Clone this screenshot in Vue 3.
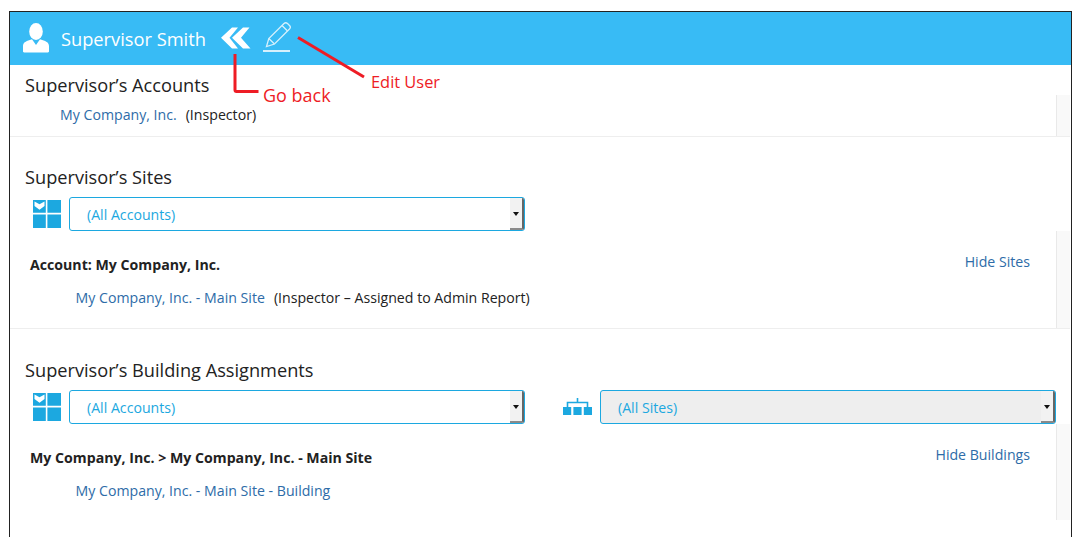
<template>
  <div class="frame">
    <header class="bar">
      <svg class="user" viewBox="0 0 26 30" width="26" height="30"><ellipse cx="13" cy="8.5" rx="6.8" ry="8.500" fill="#fff"/><path d="M1.200 29.500c-.9 0-1.200-.5-1.200-1.200v-5c0-3.500 2.500-5 6.800-6.300l2.200-.7 4 5.600 4-5.600 2.200.7c4.300 1.300 6.800 2.800 6.800 6.300v5c0 .7-.3 1.200-1.200 1.200z" fill="#fff"/></svg>
      <span class="name">Supervisor Smith</span>
      <svg class="back" viewBox="0 0 30 22" width="30" height="22"><path d="M0 10.800L11 .5h6L8.500 10.800 17 21.500h-6z M11 10.800L22 .5h6.500L20 10.800l9.500 10.700H22z" fill="#fff"/></svg>
      <svg class="pencil" viewBox="0 0 30 32" width="30" height="32" fill="none" stroke="#d6f0fc" stroke-width="1.300"><path d="M3.500 25.500l2.300-8L21 2.500c1-1 2.500-1 3.500 0l2 2c1 1 1 2.500 0 3.500L11.500 23z"/><path d="M5.800 17.500l5.700 5.500M19 4.500l5.500 5.500"/><path d="M0 30h27" stroke-width="2"/></svg>
    </header>

    <section class="section">
      <h2 class="first">Supervisor’s Accounts</h2>
      <div class="list short">
        <div class="body"><p class="row accounts"><a>My Company, Inc.</a><span>(Inspector)</span></p></div>
        <div class="strip"></div>
      </div>
    </section>

    <section class="section">
      <h2>Supervisor’s Sites</h2>
      <div class="filters">
        <svg class="grid" viewBox="0 0 28 28" width="28" height="28"><path d="M0 0h12.800v12.800H0z M14.400 0H28v12.800H14.400z M0 14.400h12.800V28H0z M14.400 14.400H28V28H14.400z" fill="#1ca8e0"/><path d="M1.500 1.500l5 2.800 5-2.800v4.500l-5 3.800-5-3.800z" fill="#fff"/></svg>
        <div class="select"><span>(All Accounts)</span><i class="spin"><b></b></i></div>
      </div>
      <div class="list mid">
        <div class="body">
          <div class="group"><strong>Account: My Company, Inc.</strong><a class="hide">Hide Sites</a></div>
          <p class="row"><a>My Company, Inc. - Main Site</a><span>(Inspector – Assigned to Admin Report)</span></p>
        </div>
        <div class="strip"></div>
      </div>
    </section>

    <section class="section last">
      <h2>Supervisor’s Building Assignments</h2>
      <div class="filters">
        <svg class="grid" viewBox="0 0 28 28" width="28" height="28"><path d="M0 0h12.800v12.800H0z M14.400 0H28v12.800H14.400z M0 14.400h12.800V28H0z M14.400 14.400H28V28H14.400z" fill="#1ca8e0"/><path d="M1.500 1.500l5 2.800 5-2.800v4.500l-5 3.800-5-3.800z" fill="#fff"/></svg>
        <div class="select"><span>(All Accounts)</span><i class="spin"><b></b></i></div>
        <svg class="tree" viewBox="0 0 29 17" width="29" height="17"><path d="M14.500 0v5M4.500 9V4.500h20V9" fill="none" stroke="#1ca8e0" stroke-width="1.600"/><path d="M0 9h8.200v8H0z M10.400 9h8.200v8h-8.200z M20.800 9H29v8h-8.200z" fill="#1ca8e0"/></svg>
        <div class="select grey"><span>(All Sites)</span><i class="spin"><b></b></i></div>
      </div>
      <div class="list tall">
        <div class="body">
          <div class="group"><strong>My Company, Inc. &gt; My Company, Inc. - Main Site</strong><a class="hide">Hide Buildings</a></div>
          <p class="row"><a>My Company, Inc. - Main Site - Building</a></p>
        </div>
        <div class="strip"></div>
      </div>
    </section>

    <svg class="arrows" width="1062" height="100" fill="none" stroke="#ee1c25" stroke-width="3"><path d="M288 25.500l66 39.500"/><path d="M225 42v36c0 1 .5 1.500 1.500 1.500h22"/></svg>
    <span class="note goback">Go back</span>
    <span class="note edit">Edit User</span>
  </div>
</template>

<script setup>
</script>

<style>
html, body { background: #fff; overflow: hidden; }
</style>

<style scoped>
.frame {
  position: relative;
  box-sizing: border-box;
  width: 1063px;
  height: 526px;
  margin: 11px 0 0 9px;
  border: 1px solid #222;
  border-bottom: 0;
  font-family: "Open Sans", sans-serif;
  color: #222;
  font-size: 14.150px;
  overflow: hidden;
}
.bar {
  display: flex;
  align-items: center;
  height: 53px;
  background: #38bbf5;
  color: #fff;
  padding-left: 13px;
}
.user { flex: none; margin-right: 12px; margin-top: -1px; }
.name { font-size: 18.250px; line-height: 24px; width: 160px; flex: none; }
.back { flex: none; margin-right: 12px; margin-top: -1px; }
.pencil { flex: none; margin-top: -3px; }
.section { border-bottom: 1px solid #eee; margin-right: 1px; }
.section.last { border-bottom: 0; }
h2 {
  margin: 0;
  padding: 36px 0 0 15px;
  font-size: 18.200px;
  font-weight: 400;
  line-height: 24px;
  box-sizing: border-box;
}
h2.first { padding-top: 8px; height: 30px; }
.section:nth-of-type(2) h2 { height: 60px; padding-top: 28px; }
.section.last h2 { height: 61px; padding-top: 29px; }
.filters {
  display: flex;
  align-items: center;
  padding-left: 22px;
  height: 34px;
}
.grid { flex: none; margin: 0 8px 0 1px; }
.select {
  box-sizing: border-box;
  position: relative;
  flex: none;
  width: 456px;
  height: 34px;
  border: 1px solid #1ca8e0;
  border-radius: 3px;
  color: #1ca8e0;
  line-height: 33px;
  padding-left: 17px;
  background: #fff;
}
.select.grey { background: #eee; }
.tree { flex: none; margin: -1px 8px 0 38px; }
.spin {
  position: absolute;
  right: 0;
  top: 0;
  bottom: 0;
  width: 14px;
  background: #f2f2f2;
  border-right: 2px solid #666;
  border-bottom: 2px solid #8a8a8a;
  box-sizing: border-box;
  border-radius: 0 2px 2px 0;
}
.spin b {
  position: absolute;
  left: 3px;
  top: 14px;
  border: 3.500px solid transparent;
  border-top: 4px solid #111;
  border-bottom: 0;
}
.list { display: flex; }
.short { height: 41px; }
.mid { height: 97px; }
.tall { height: 96px; }
.body { flex: 1; min-width: 0; }
.strip {
  flex: none;
  width: 14px;
  box-sizing: border-box;
  background: #f9f9f9;
  border-left: 1px solid #e9e9e9;
}
a { color: #2e6ca8; }
.row { margin: 0; line-height: 20px; padding-left: 65.500px; }
.row span { margin-left: 9px; }
.row.accounts { padding: 10px 0 0 50px; }
.group {
  display: flex;
  justify-content: space-between;
  align-items: flex-start;
  padding: 24px 26px 0 20px;
  height: 57px;
  box-sizing: border-box;
  line-height: 20px;
}
.group strong { font-weight: 700; }
.hide { margin-top: -3px; }
.arrows { position: absolute; left: 0; top: 0; pointer-events: none; }
.note { position: absolute; color: #ee1c25; white-space: nowrap; line-height: 20px; }
.goback { left: 253px; top: 73px; font-size: 18px; }
.edit { left: 361px; top: 60px; font-size: 16.400px; }
</style>
